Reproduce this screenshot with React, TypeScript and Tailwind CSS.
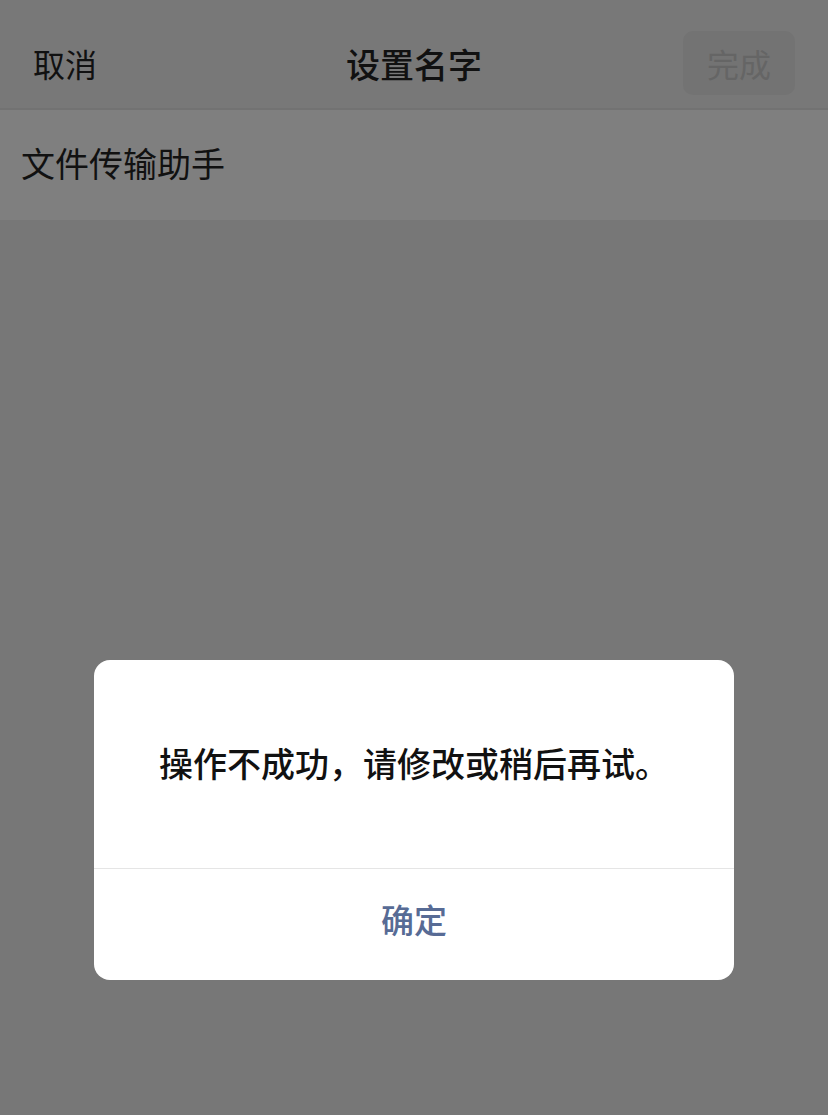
export default function App() {
  const font = { fontFamily: '"Noto Sans CJK SC", "Noto Sans", sans-serif' }
  return (
    <div className="w-[828px] h-[1115px] bg-[#777777] flex flex-col relative overflow-hidden" style={font}>
      {/* Header */}
      <div className="h-[108px] bg-[#787878] flex items-center justify-between pl-[33px] pr-[33px] pt-[18px] relative">
        <span className="text-[32px] text-[#111111]">取消</span>
        <span className="absolute left-1/2 top-[18px] bottom-0 flex items-center -translate-x-1/2 text-[34px] font-medium text-[#111111]">设置名字</span>
        <div className="w-[112px] h-[64px] rounded-[10px] bg-[#737373] flex items-center justify-center">
          <span className="text-[32px] text-[#656565]">完成</span>
        </div>
      </div>
      <div className="h-[2px] bg-[#727272]" />

      {/* Input row */}
      <div className="h-[110px] bg-[#7f7f7f] flex items-center px-[21px] pb-[5px]">
        <span className="text-[34px] text-[#111111]">文件传输助手</span>
      </div>

      {/* Alert overlay */}
      <div className="flex-1 flex justify-center pt-[440px]">
        <div className="w-[640px] h-[320px] bg-white rounded-[16px] flex flex-col overflow-hidden">
          <div className="h-[208px] flex items-center justify-center pb-[4px]">
            <span className="text-[34px] font-medium text-[#111111]">操作不成功，请修改或稍后再试。</span>
          </div>
          <div className="h-px bg-[#e5e5e5]" />
          <div className="flex-1 flex items-center justify-center pb-[10px]">
            <span className="text-[33px] font-medium text-[#576b95]">确定</span>
          </div>
        </div>
      </div>
    </div>
  )
}
